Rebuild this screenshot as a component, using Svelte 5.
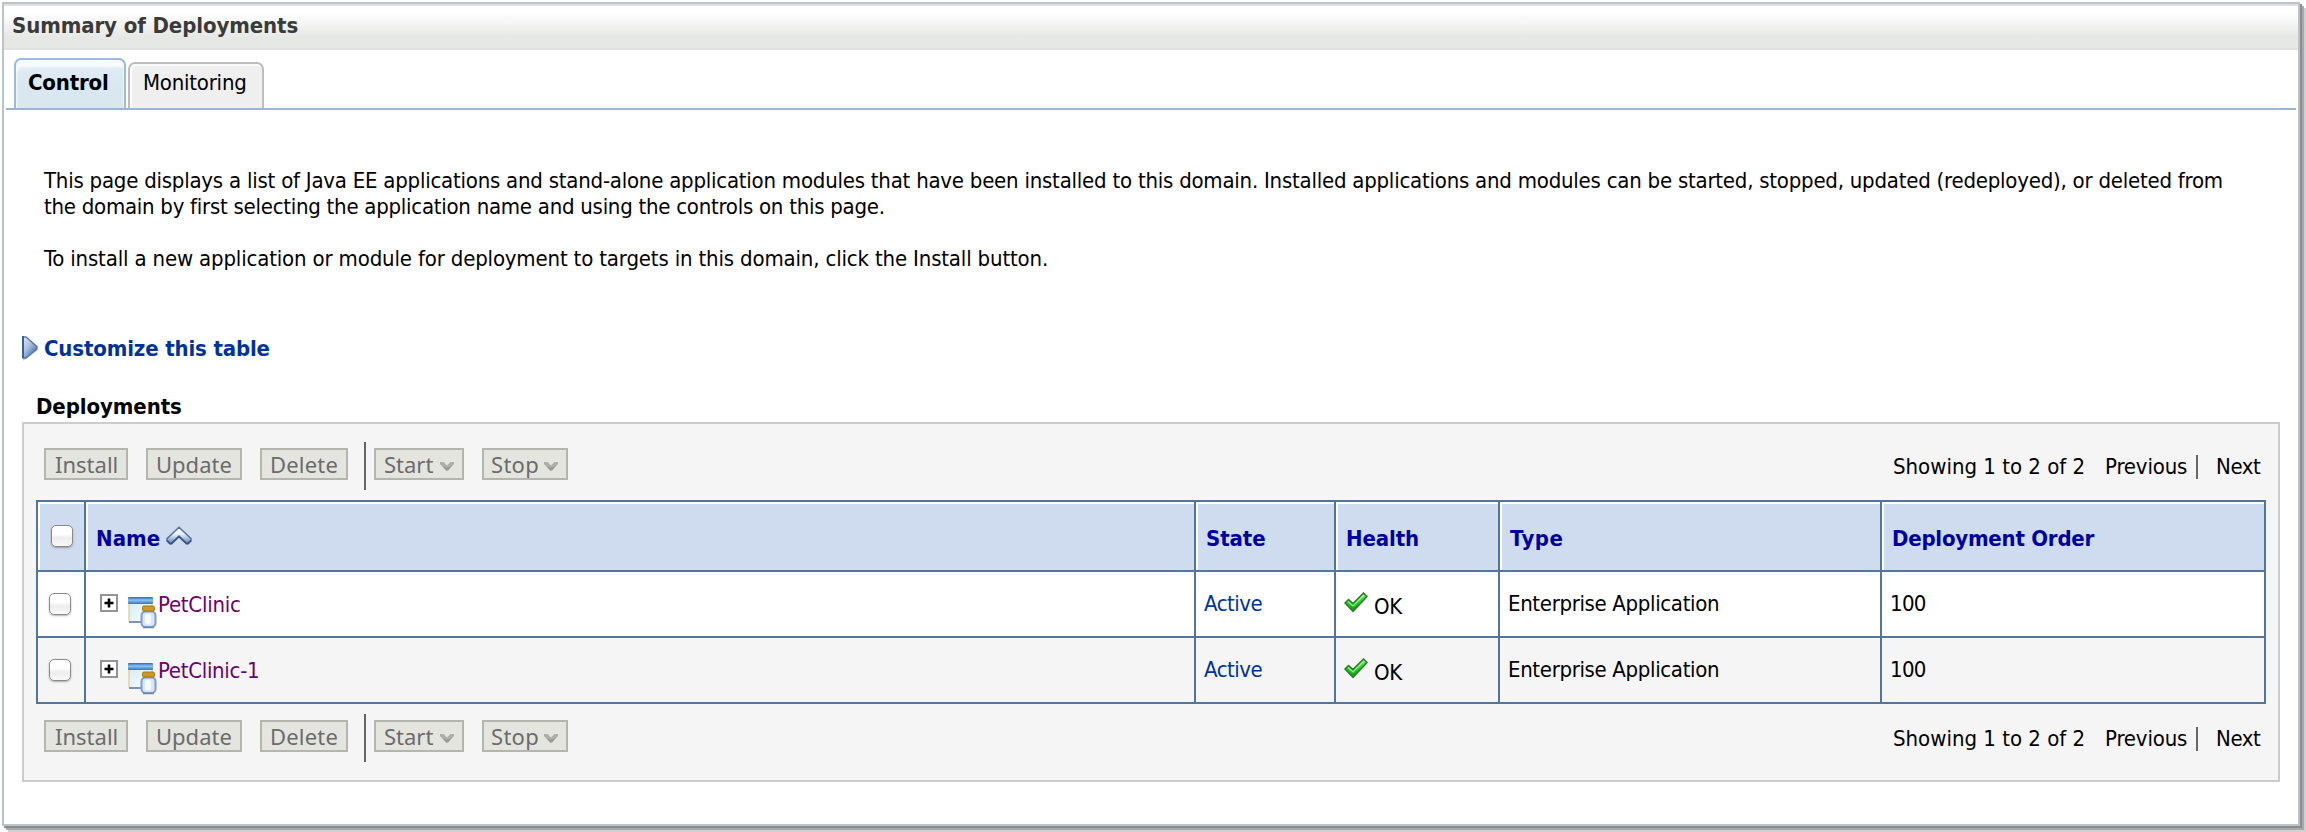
<script>
  const columns = [
    { label: 'Name', cls: 'name', sorted: true },
    { label: 'State', cls: 'state' },
    { label: 'Health', cls: 'health' },
    { label: 'Type', cls: 'type' },
    { label: 'Deployment Order', cls: 'order' }
  ];
  const rows = [
    { name: 'PetClinic', state: 'Active', health: 'OK', type: 'Enterprise Application', order: '100' },
    { name: 'PetClinic-1', state: 'Active', health: 'OK', type: 'Enterprise Application', order: '100' }
  ];
</script>

{#snippet chevron()}
  <svg class="chev" width="14" height="9" viewBox="0 0 14 9"><path d="M0 0H3.500L7 3.500L10.500 0H14V2L8 8.500H6L0 2Z" fill="#aeafa9" /><path d="M2.500 4L6 8.500H8L11.500 4L7 5.500Z" fill="#9b9c96" /></svg>
{/snippet}

{#snippet toolbar(cls)}
  <div class="toolbar {cls}">
    <button class="install" disabled>Install</button>
    <button class="update" disabled>Update</button>
    <button class="delete" disabled>Delete</button>
    <span class="rule"></span>
    <button class="start" disabled>Start{@render chevron()}</button>
    <button class="stop" disabled>Stop{@render chevron()}</button>
    <div class="paging">
      <span class="showing">Showing 1 to 2 of 2</span>
      <span class="prev">Previous</span>
      <span class="bar"></span>
      <span class="next">Next</span>
    </div>
  </div>
{/snippet}

<svg width="0" height="0" class="defs">
  <defs>
    <linearGradient id="tri" x1="0" y1="0" x2=".9" y2="1"><stop offset="0" stop-color="#dfe9f7" /><stop offset=".45" stop-color="#a9c1e3" /><stop offset="1" stop-color="#33598f" /></linearGradient>
    <linearGradient id="sort" x1="0" y1="0" x2="0" y2="1"><stop offset="0" stop-color="#fff" /><stop offset=".45" stop-color="#e3ecf7" /><stop offset="1" stop-color="#5f83b3" /></linearGradient>
    <linearGradient id="win" x1="0" y1="0" x2="1" y2="1"><stop offset="0" stop-color="#cfeafa" /><stop offset="1" stop-color="#fff" /></linearGradient>
    <linearGradient id="bar" x1="0" y1="0" x2="0" y2="1"><stop offset="0" stop-color="#2468ba" /><stop offset=".45" stop-color="#8dc4f4" /><stop offset="1" stop-color="#3273bd" /></linearGradient>
    <linearGradient id="tick" x1="0" y1="0" x2="0" y2="1"><stop offset="0" stop-color="#7ee87a" /><stop offset=".5" stop-color="#1fd01f" /><stop offset="1" stop-color="#0a9a0a" /></linearGradient>
  </defs>
</svg>

<main class="frame">
  <header><h1>Summary of Deployments</h1></header>
  <nav>
    <span class="tab active">Control</span>
    <span class="tab">Monitoring</span>
  </nav>
  <section class="intro">
    <p>This page displays a list of Java EE applications and stand-alone application modules that have been installed to this domain. Installed applications and modules can be started, stopped, updated (redeployed), or deleted from<br /><span class="second">the domain by first selecting the application name and using the controls on this page.</span></p>
    <p class="install-note">To install a new application or module for deployment to targets in this domain, click the Install button.</p>
  </section>
  <div class="customize">
    <svg width="18" height="26" viewBox="0 0 18 26">
      <path d="M1 4V25L16 14Z" fill="#000" opacity=".2" />
      <path d="M1 1H4L15 10.500V13L4 22H1Z" fill="url(#tri)" stroke="#5578ac" stroke-width="1.400" />
      <path d="M1 0V22" stroke="#3c5f98" stroke-width="2" />
    </svg>
    <a>Customize this table</a>
  </div>
  <h2>Deployments</h2>
  <section class="panel">
    {@render toolbar('top')}
    <table>
      <thead>
        <tr>
          <th class="pick"><span class="check"></span></th>
          {#each columns as c}
            <th class={c.cls}><div class="head"><span>{c.label}</span>{#if c.sorted}<svg width="26" height="20" viewBox="0 0 26 20">
              <path d="M2 16L13 5L24 16" stroke="#000" stroke-opacity=".15" stroke-width="4" fill="none" />
              <path d="M13 1.200L25 12.600V14.600L22 17.600H20.500L13 10.400L5.500 17.600H4L1 14.600V12.600Z" fill="url(#sort)" stroke="#54759f" stroke-width="1.500" />
              <path d="M1 14.600L4 17.600H5.500L13 10.400L20.500 17.600H22L25 14.600" fill="none" stroke="#36547f" stroke-width="1.700" />
            </svg>{/if}</div></th>
          {/each}
        </tr>
      </thead>
      <tbody>
        {#each rows as r}
          <tr>
            <td class="pick"><span class="check"></span></td>
            <td><div class="app">
              <svg class="plus" width="18" height="18" viewBox="0 0 18 18"><rect x="1" y="1" width="16" height="16" fill="#fff" stroke="#949494" stroke-width="2" /><path d="M9 4.500V13.500M4.500 9H13.500" stroke="#000" stroke-width="2.600" /></svg>
              <svg class="icon" width="30" height="32" viewBox="0 0 30 32">
                <rect x="1" y="1" width="23" height="24" rx="1.500" fill="url(#win)" stroke="#dccb8c" stroke-width="1.200" />
                <path d="M1 25H24" stroke="#7f93b5" stroke-width="2" />
                <rect x="0" y="0" width="25" height="7" rx="1" fill="url(#bar)" />
                <rect x="13.500" y="14.500" width="14" height="15.500" rx="4" fill="#d9e7fa" stroke="#7f9ccb" stroke-width="2" />
                <rect x="17" y="17" width="6" height="10" rx="2" fill="#f6faff" />
                <path d="M15 30.500H26" stroke="#6e86ad" stroke-width="1.500" />
                <rect x="14.500" y="9" width="12" height="5" rx="1.500" fill="#cf9a24" stroke="#a97712" stroke-width="1" />
              </svg>
              <a class:suffixed={r.name.includes('-')}>{r.name}</a>
            </div></td>
            <td><a class="active-state">{r.state}</a></td>
            <td><div class="ok">
              <svg width="24" height="21" viewBox="0 0 24 21">
                <path d="M1 11L4.500 7.500L9 11.500L19.500 1L23 4.500L9 19.500Z" fill="url(#tick)" stroke="#2c7a2c" stroke-width="1.500" />
                <path d="M4 9.500L9 14L20 3" stroke="#b9f7b5" stroke-width="1.200" fill="none" opacity=".8" />
              </svg>
              <span>{r.health}</span>
            </div></td>
            <td><span class="kind">{r.type}</span></td>
            <td><span class="num">{r.order}</span></td>
          </tr>
        {/each}
      </tbody>
    </table>
    {@render toolbar('bottom')}
  </section>
</main>

<style>
  :global(body) { background: #fff; }
  :global(#app) { display: flow-root; height: 832px; overflow: hidden; }
  * { box-sizing: border-box; }
  .defs { display: block; height: 0; }
  .frame {
    width: 2298px; height: 824px; margin: 2px 0 0 2px;
    border: 2px solid #bcc4c9; background: #fff;
    box-shadow: 2px 2px 0 #8c8c8c, 4px 4px 0 #a9a9a9, 6px 6px 0 #d0d0d0;
    font: 22px/26px "DejaVu Sans Condensed", "DejaVu Sans", sans-serif;
    letter-spacing: -.23px; color: #000;
  }
  header {
    height: 46px; border-top: 2px solid #e0e0e0; border-bottom: 2px solid #e0e0e0;
    background: linear-gradient(#fff 15%, #e6e8e5 75%); padding: 7px 0 0 8px;
  }
  h1 { margin: 0; font-size: 22px; line-height: 26px; color: #3a3a3a; letter-spacing: -.1px; }
  nav {
    display: flex; align-items: flex-end; gap: 2px; height: 60px;
    margin: 0 2px; padding-left: 8px; border-bottom: 2px solid #9bb5d2;
  }
  .tab {
    width: 136px; height: 46px; padding: 6px 0 0 13px;
    border: 2px solid #bdbdbd; border-bottom: 0; border-radius: 7px 7px 0 0;
    background: #efefef; box-shadow: inset 2px 2px 0 #fafafa;
  }
  .tab.active {
    width: 112px; height: 50px; padding: 10px 0 0 12px; font-weight: bold;
    letter-spacing: -.17px; border-color: #9db9dc;
    background: linear-gradient(#e6eff6, #d9e7f1 50%);
    box-shadow: inset 2px 8px 2px -1px #f8fbfd, inset -1px 0 0 #f0f6fa;
  }
  .intro { padding: 58px 0 0 40px; white-space: nowrap; }
  p { margin: 0 0 26px; }
  .second { letter-spacing: -.26px; }
  .install-note { letter-spacing: -.165px; }
  .customize { display: flex; align-items: flex-start; margin: 64px 0 0 18px; height: 52px; }
  .customize svg { margin-right: 4px; }
  .customize a { color: #003399; font-weight: bold; letter-spacing: -.15px; }
  h2 { margin: 6px 0 2px 32px; font-size: 22px; line-height: 26px; letter-spacing: -.09px; }
  .panel {
    width: 2258px; height: 360px; margin-left: 18px;
    border: 2px solid #ccc; background: #f5f5f5; padding: 18px 12px 0;
  }
  .toolbar { display: flex; align-items: center; height: 48px; padding-left: 8px; }
  .toolbar.top { margin-bottom: 10px; }
  .toolbar.bottom { margin-top: 10px; }
  button {
    display: flex; align-items: center; height: 32px; margin: -4px 0 0; padding: 0 0 0 9px;
    border: 2px solid #b4b5ae; background: #e4e5df; color: #6b6b6b;
    font: 22px/26px "Noto Sans", sans-serif; letter-spacing: 0; white-space: nowrap;
  }
  .install { width: 84px; margin-right: 18px; }
  .update { width: 96px; padding-left: 8px; margin-right: 18px; }
  .delete { width: 88px; padding-left: 8px; letter-spacing: .2px; }
  .rule { width: 2px; height: 48px; margin: 0 8px 0 16px; background: #666; }
  .start { width: 90px; padding-left: 8px; margin-right: 18px; }
  .stop { width: 86px; padding-left: 7px; letter-spacing: .3px; }
  .chev { flex: none; margin: 4px 0 0 auto; }
  .start .chev, .stop .chev { margin-right: 8px; }
  .paging { display: flex; align-items: center; margin-left: auto; padding-right: 5px; }
  .paging span { position: relative; top: 1px; }
  .showing { letter-spacing: 0; width: 212px; }
  .prev { letter-spacing: -.17px; width: 91px; }
  .bar { width: 2px; height: 24px; background: #666; margin-right: 18px; }
  .next { letter-spacing: -.4px; width: 45px; }
  table { width: 2230px; border-collapse: collapse; table-layout: fixed; border: 2px solid #537597; }
  th, td { border: 2px solid #537597; text-align: left; vertical-align: middle; height: 66px; padding: 0 0 0 8px; }
  th { height: 70px; background: #cfdbee; box-shadow: inset 2px 2px 0 #fff; color: #0000a0; padding: 6px 0 0 10px; }
  tbody tr { background: #fff; }
  tbody tr:nth-child(2) { background: #f5f5f5; }
  .pick { width: 48px; padding: 0 0 0 11px; }
  th.pick { padding: 0 0 0 13px; }
  th.state { width: 140px; letter-spacing: -.1px; }
  th.health { width: 164px; letter-spacing: -.1px; }
  th.type { width: 382px; letter-spacing: .5px; }
  th.order { width: 384px; }
  th.name { letter-spacing: .1px; }
  .head { display: flex; align-items: center; }
  .head svg { margin: -6px 0 0 6px; }
  .check {
    display: block; width: 22px; height: 22px; border-radius: 5px; border: 1.500px solid #8a8a8a;
    background: linear-gradient(#fff 40%, #ececec 60%, #fafafa); box-shadow: 0 1px 2px rgba(0, 0, 0, .3);
  }
  .app { display: flex; align-items: flex-start; height: 34px; padding: 5px 0 0 6px; }
  .plus { margin: 2px 10px 0 0; }
  .icon { margin-top: 5px; }
  .app a { color: #6b006f; letter-spacing: -.25px; }
  .app a.suffixed { letter-spacing: -.3px; }
  .active-state { color: #003399; letter-spacing: -.5px; }
  .ok { display: flex; align-items: flex-start; height: 24px; }
  .ok span { margin-top: 2px; }
  .ok svg { margin-right: 6px; }
  .kind { letter-spacing: -.34px; }
  .num { letter-spacing: -.7px; }
</style>
